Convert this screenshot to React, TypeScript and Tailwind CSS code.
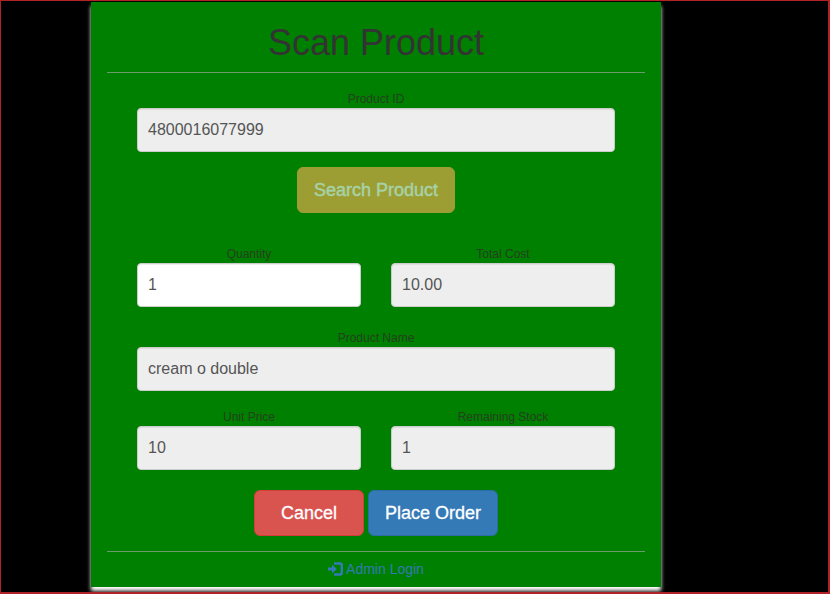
type FieldProps = { label: string; value: string; editable?: boolean };

function Field({ label, value, editable = false }: FieldProps) {
  return (
    <div className="min-w-0 flex-1">
      <label className="flex h-[17px] items-center justify-center text-xs leading-[17px] text-[#24401f]">
        {label}
      </label>
      <input
        className={`block h-11 w-full rounded border border-[#cccccc] px-[10px] pb-[1px] text-base text-[#555555] shadow-[inset_0_1px_1px_rgba(0,0,0,0.075)] outline-none ${editable ? "bg-white" : "bg-[#eeeeee]"}`}
        defaultValue={value}
        readOnly={!editable}
      />
    </div>
  );
}

function LoginIcon() {
  return (
    <svg width="15" height="14" viewBox="0 0 15 14" fill="none" className="shrink-0">
      <path d="M0 5.4h4V2.6L8.8 7 4 11.4V8.6H0z" fill="currentColor" />
      <path d="M6 1.5h6q1.8 0 1.8 1.8v7.4q0 1.8-1.8 1.8H6" stroke="currentColor" strokeWidth="2.4" />
    </svg>
  );
}

export default function App() {
  return (
    <div
      className="h-[594px] w-[830px] overflow-hidden border border-r-2 border-b-2 border-[#b02226] bg-black pt-px pl-[90px]"
      style={{ fontFamily: '"Liberation Sans", Arial, sans-serif' }}
    >
      <main className="flex h-[585px] w-[570px] flex-col bg-[#008000] px-4 shadow-[0_4px_4px_#ffffff]">
        <h1 className="h-[70px] pt-[21px] text-center text-4xl leading-10 text-[#333333]">Scan Product</h1>
        <hr className="border-t border-[#6b9a6b]" />
        <form className="flex h-[478px] flex-col px-[30px] pt-[18px]" onSubmit={(e) => e.preventDefault()}>
          <div className="flex">
            <Field label="Product ID" value="4800016077999" />
          </div>
          <div className="mt-[15px] flex justify-center">
            <button
              disabled
              className="h-[46px] w-[158px] rounded-md border border-[#f0ad4e] bg-[#f0ad4e] text-lg text-white opacity-65 [-webkit-text-stroke:0.4px]"
            >
              Search Product
            </button>
          </div>
          <div className="mt-[33px] flex gap-[30px]">
            <Field label="Quantity" value="1" editable />
            <Field label="Total Cost" value="10.00" />
          </div>
          <div className="mt-[23px] flex">
            <Field label="Product Name" value="cream o double" />
          </div>
          <div className="mt-[18px] flex gap-[30px]">
            <Field label="Unit Price" value="10" />
            <Field label="Remaining Stock" value="1" />
          </div>
          <div className="mt-5 flex justify-center gap-1">
            <button className="h-[46px] w-[110px] rounded-md border border-[#d43f3a] bg-[#d9534f] text-lg text-white [-webkit-text-stroke:0.3px]">
              Cancel
            </button>
            <button className="h-[46px] w-[130px] rounded-md border border-[#2e6da4] bg-[#337ab7] text-lg text-white [-webkit-text-stroke:0.3px]">
              Place Order
            </button>
          </div>
        </form>
        <hr className="border-t border-[#6b9a6b]" />
        <a className="flex h-[33px] items-center justify-center gap-[3px] text-sm text-[#337ab7]" href="#">
          <LoginIcon />
          Admin Login
        </a>
      </main>
    </div>
  );
}
